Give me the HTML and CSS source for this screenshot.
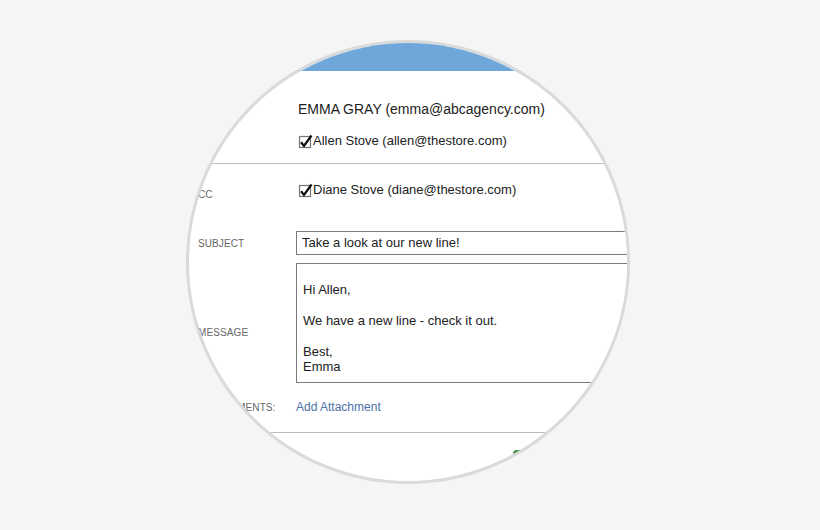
FILE: index.html
```html
<!DOCTYPE html>
<html lang="en">
<head>
  <meta charset="UTF-8" />
  <meta name="viewport" content="width=device-width, initial-scale=1.0" />
  <title>Compose Email</title>
  <link rel="stylesheet" href="styles.css">
</head>
<body>

  <div class="lens">
    <div class="compose">
      <!-- Blue title bar -->
      <div class="titlebar"></div>

      <!-- From / To -->
      <div class="from">
        <div class="sender">EMMA GRAY (emma@abcagency.com)</div>
        <div class="recipient">
          <svg class="check" width="15" height="15" viewBox="0 0 15 15">
            <rect x="1.5" y="2.5" width="11" height="11" fill="#fff" stroke="#777" stroke-width="1.2" />
            <path d="M3 8.2 L6 12 L13.5 1.5" fill="none" stroke="#111" stroke-width="2.2" />
          </svg>
          <span>Allen Stove (allen@thestore.com)</span>
        </div>
      </div>

      <div class="fields">
        <!-- CC -->
        <div class="row row-cc">
          <div class="label">CC</div>
          <div class="recipient">
            <svg class="check" width="15" height="15" viewBox="0 0 15 15">
              <rect x="1.5" y="2.5" width="11" height="11" fill="#fff" stroke="#777" stroke-width="1.2" />
              <path d="M3 8.2 L6 12 L13.5 1.5" fill="none" stroke="#111" stroke-width="2.2" />
            </svg>
            <span>Diane Stove (diane@thestore.com)</span>
          </div>
        </div>

        <!-- Subject -->
        <div class="row row-subject">
          <label class="label" for="subject">SUBJECT</label>
          <input id="subject" class="subject" type="text" value="Take a look at our new line!" />
        </div>

        <!-- Message -->
        <div class="row row-message">
          <label class="label label-message" for="message">MESSAGE</label>
          <textarea id="message" class="message">Hi Allen,

We have a new line - check it out.

Best,
Emma</textarea>
        </div>

        <!-- Attachments -->
        <div class="row row-attach">
          <div class="label">ATTACHMENTS:</div>
          <a class="attach" href="#">Add Attachment</a>
        </div>
      </div>

      <!-- Footer -->
      <div class="footer">
        <button class="send" type="button">Send</button>
      </div>
    </div>
  </div>

</body>
</html>
```

FILE: styles.css
```css
/* Global Styles */
body {
  margin: 0;
  background-color: #f5f5f5;
  font-family: 'Liberation Sans', Arial, sans-serif;
  color: #222;
}

/* Magnifier circle */
.lens {
  box-sizing: border-box;
  width: 444px;
  height: 444px;
  margin: 40px 0 0 186px;
  border: 3px solid #dadada;
  border-radius: 50%;
  overflow: hidden;
  background-color: #fff;
}

.compose {
  width: 560px;
}

.titlebar {
  height: 28px;
  background-color: #6fa7db;
}

/* From block */
.from {
  padding: 30px 0 14px 109px;
  border-bottom: 1px solid #bcbcbc;
}

.sender {
  font-size: 14px;
  line-height: 16px;
  width: 247px;
  overflow: hidden;
  white-space: nowrap;
}

.recipient {
  display: flex;
  align-items: center;
  font-size: 13px;
  line-height: 16px;
  margin-top: 16px;
}

.check {
  display: block;
  flex: none;
}

/* Fields */
.fields {
  padding: 18px 0 18px 9px;
  border-bottom: 1px solid #bcbcbc;
}

.row {
  display: grid;
  grid-template-columns: 98px 1fr;
  align-items: baseline;
}

.row .recipient {
  margin-top: 0;
  margin-left: 2px;
}

.label {
  font-size: 10px;
  color: #666;
  letter-spacing: 0.1px;
}

.row-subject {
  margin-top: 31px;
}

.subject {
  box-sizing: border-box;
  height: 24px;
  width: 100%;
  margin: 0;
  padding: 0 5px;
  border: 1px solid #7a7a7a;
  font-family: 'Liberation Sans', Arial, sans-serif;
  font-size: 13px;
  color: #222;
}

.row-message {
  margin-top: 8px;
  align-items: start;
}

.label-message {
  padding-top: 64px;
}

.message {
  box-sizing: border-box;
  display: block;
  height: 120px;
  width: 100%;
  margin: 0;
  padding: 18px 6px 0;
  border: 1px solid #7a7a7a;
  font-family: 'Liberation Sans', Arial, sans-serif;
  font-size: 13px;
  line-height: 15.5px;
  color: #222;
  resize: none;
  overflow: hidden;
}

.row-attach {
  margin-top: 17px;
}

.attach {
  font-size: 12px;
  color: #4d70a6;
  text-decoration: none;
}

/* Footer */
.footer {
  padding: 17px 0 0 324px;
}

.send {
  width: 80px;
  height: 30px;
  border: none;
  border-radius: 4px;
  background-color: #3f8f3f;
  color: #fff;
  font-size: 13px;
}
```
